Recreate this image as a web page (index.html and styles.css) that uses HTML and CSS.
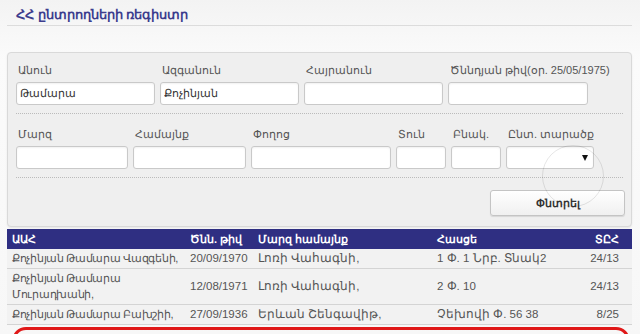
FILE: index.html
```html
<!DOCTYPE html>
<html lang="hy">
<head>
  <meta charset="UTF-8">
  <meta name="viewport" content="width=device-width, initial-scale=1.0">
  <title>ՀՀ ընտրողների ռեգիստր</title>
  <link rel="stylesheet" href="styles.css">
</head>
<body>

  <div class="page">
    <h1 class="title">ՀՀ ընտրողների ռեգիստր</h1>

    <form class="search">
      <div class="row row-top">
        <label class="field">
          <span>Անուն</span>
          <input type="text" value="Թամարա">
        </label>
        <label class="field">
          <span>Ազգանուն</span>
          <input type="text" value="Քոչինյան">
        </label>
        <label class="field">
          <span>Հայրանուն</span>
          <input type="text">
        </label>
        <label class="field">
          <span>Ծննդյան թիվ(օր. 25/05/1975)</span>
          <input type="text">
        </label>
      </div>

      <div class="row row-address">
        <label class="field">
          <span>Մարզ</span>
          <input type="text">
        </label>
        <label class="field">
          <span>Համայնք</span>
          <input type="text">
        </label>
        <label class="field">
          <span>Փողոց</span>
          <input type="text">
        </label>
        <label class="field">
          <span>Տուն</span>
          <input type="text">
        </label>
        <label class="field">
          <span>Բնակ.</span>
          <input type="text">
        </label>
        <label class="field">
          <span>Ընտ. տարածք</span>
          <div class="select">
            <select></select>
          </div>
        </label>
      </div>

      <div class="actions">
        <button type="button">Փնտրել</button>
      </div>

      <div class="ripple"></div>
    </form>

    <table class="results">
      <thead>
        <tr>
          <th class="c-name">ԱԱՀ</th>
          <th class="c-date">Ծնն. թիվ</th>
          <th class="c-region">Մարզ համայնք</th>
          <th class="c-addr">Հասցե</th>
          <th class="c-num">ՏԸՀ</th>
        </tr>
      </thead>
      <tbody>
        <tr>
          <td class="name">Քոչինյան Թամարա Վազգենի,</td>
          <td>20/09/1970</td>
          <td>Լոռի Վահագնի,</td>
          <td>1 Փ. 1 Նրբ. Տնակ2</td>
          <td class="c-num">24/13</td>
        </tr>
        <tr>
          <td class="name">Քոչինյան Թամարա Մուրադխանի,</td>
          <td>12/08/1971</td>
          <td>Լոռի Վահագնի,</td>
          <td>2 Փ. 10</td>
          <td class="c-num">24/13</td>
        </tr>
        <tr>
          <td class="name">Քոչինյան Թամարա Բախշիի,</td>
          <td>27/09/1936</td>
          <td>Երևան Շենգավիթ,</td>
          <td>Չեխովի Փ. 56 38</td>
          <td class="c-num">8/25</td>
        </tr>
      </tbody>
    </table>

    <div class="mark"></div>
  </div>

</body>
</html>
```

FILE: styles.css
```css
body {
  font-family: "Liberation Sans", sans-serif;
  margin: 0;
  background: linear-gradient(#f3f3f3, #fbfbfb 60px, #f7f7f7);
  color: #555;
  font-size: 11px;
}
.page {
  position: relative;
  padding: 0 8px 0 7px;
  height: 334px;
  overflow: hidden;
}
.title {
  margin: 0;
  padding: 10px 9px 6px;
  font-size: 13px;
  line-height: 9px;
  font-weight: bold;
  color: #3d3d8e;
  border-bottom: 1px solid #dcdcdc;
}
.search {
  position: relative;
  margin-top: 26px;
  background: #efefef;
  border: 1px solid #d9d9d9;
  border-radius: 4px;
  padding: 10px 6px 10px 8px;
  box-shadow: 0 1px 2px rgba(0, 0, 0, 0.08);
}
.row {
  display: grid;
  gap: 5px;
  padding-bottom: 8px;
  margin-bottom: 13px;
  margin-right: 2px;
  border-bottom: 1px dotted #bbb;
}
.row-top {
  grid-template-columns: 139px 139px 139px 140px;
}
.row-address {
  grid-template-columns: 112px 113px 140px 50px 50px 88px;
}
.field span {
  display: block;
  padding-left: 2px;
  line-height: 14px;
  margin-bottom: 5px;
  color: #555;
  white-space: nowrap;
}
.field input,
.select select {
  box-sizing: border-box;
  display: block;
  width: 100%;
  height: 23px;
  margin: 0;
  padding: 0 3px;
  border: 1px solid #c9c9c9;
  border-radius: 3px;
  background: #fff;
  font: 11px "Liberation Sans", sans-serif;
  color: #333;
  box-shadow: inset 0 1px 2px rgba(0, 0, 0, 0.06);
}
.select {
  position: relative;
}
.select select {
  appearance: none;
}
.select::after {
  content: "";
  position: absolute;
  right: 6px;
  top: 9px;
  border-left: 3px solid transparent;
  border-right: 3px solid transparent;
  border-top: 6px solid #111;
}
.actions {
  display: flex;
  justify-content: flex-end;
  margin-top: -1px;
}
.actions button {
  width: 135px;
  height: 26px;
  border: 1px solid #c4c4c4;
  border-radius: 3px;
  background: linear-gradient(#ffffff, #f0f0f0);
  box-shadow: 0 1px 1px rgba(0, 0, 0, 0.1);
  font: bold 11px "Liberation Sans", sans-serif;
  color: #333;
}
.ripple {
  position: absolute;
  left: 534px;
  top: 92px;
  width: 60px;
  height: 60px;
  border: 1px solid rgba(0, 0, 0, 0.1);
  border-radius: 50%;
  pointer-events: none;
}
.results {
  width: 625px;
  margin-top: 2px;
  border-collapse: collapse;
  table-layout: fixed;
}
.results th {
  background: #2f2f82;
  color: #fff;
  font-weight: bold;
  text-align: left;
  height: 20px;
  padding: 0 5px;
}
.results td {
  background: #f2f2f2;
  border-bottom: 1px solid #d4d4d4;
  padding: 1px 5px 2px;
  line-height: 16px;
  color: #555;
  font-size: 11.5px;
}
.results td.name {
  font-size: 11px;
  letter-spacing: -0.3px;
}
.results .c-name,
.results td.name {
  padding-right: 1px;
}
.c-name { width: 172px; }
.c-date { width: 58px; }
.c-region { width: 169px; }
.c-addr { width: 125px; }
.results .c-num {
  text-align: right;
  padding-right: 13px;
}
.mark {
  position: absolute;
  left: 12px;
  top: 327px;
  width: 612px;
  height: 40px;
  border: 3px solid #e01818;
  border-radius: 14px;
}
```
